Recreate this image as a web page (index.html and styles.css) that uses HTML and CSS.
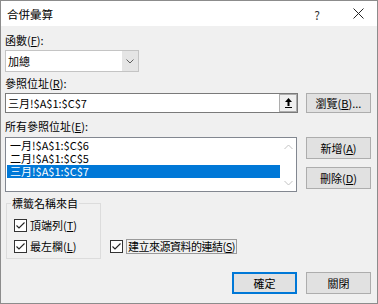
FILE: index.html
```html
<!DOCTYPE html>
<html lang="zh-Hant">
<head>
<meta charset="utf-8">
<link rel="stylesheet" href="styles.css">
</head>
<body>
<div class="win">
  <div class="titlebar">
    <span class="title">合併彙算</span>
    <span class="help">?</span>
    <span class="close"><svg width="11" height="11" viewBox="0 0 11 11"><path d="M0.5 0.5L10.5 10.5M10.5 0.5L0.5 10.5" stroke="#222" stroke-width="1" fill="none"/></svg></span>
  </div>
  <div class="content">
    <div class="lbl l1">函數(<u>F</u>):</div>
    <div class="combo">
      <span class="combo-text">加總</span>
      <span class="drop"><svg width="8" height="5" viewBox="0 0 8 5"><path d="M0.5 0.5L4 4L7.5 0.5" stroke="#606060" stroke-width="1" fill="none"/></svg></span>
    </div>
    <div class="lbl l2">參照位址(<u>R</u>):</div>
    <div class="row r1">
      <div class="refinput">
        <span class="reftext">三月!$A$1:$C$7</span>
        <span class="collapse"><svg width="9" height="12" viewBox="0 0 9 12"><path d="M4.5 1L1 5H3.5V9H5.5V5H8Z" fill="#000"/><rect x="1" y="10" width="7" height="1" fill="#000"/></svg></span>
      </div>
      <button class="btn">瀏覽(<u>B</u>)...</button>
    </div>
    <div class="lbl l3">所有參照位址(<u>E</u>):</div>
    <div class="row r2">
      <div class="list">
        <div class="items">
          <div class="item">一月!$A$1:$C$6</div>
          <div class="item">二月!$A$1:$C$5</div>
          <div class="item sel">三月!$A$1:$C$7</div>
        </div>
        <div class="sb">
          <svg width="9" height="6" viewBox="0 0 9 6"><path d="M0.5 5L4.5 1L8.5 5" stroke="#c2c2c2" stroke-width="1" fill="none"/></svg>
          <svg width="9" height="6" viewBox="0 0 9 6"><path d="M0.5 1L4.5 5L8.5 1" stroke="#c2c2c2" stroke-width="1" fill="none"/></svg>
        </div>
      </div>
      <div class="btncol">
        <button class="btn">新增(<u>A</u>)</button>
        <button class="btn">刪除(<u>D</u>)</button>
      </div>
    </div>
    <div class="row r3">
      <fieldset class="group">
        <legend>標籤名稱來自</legend>
        <label class="chk"><span class="box"><svg width="11" height="11" viewBox="0 0 11 11"><path d="M1.5 5.5L4 8L9.5 2.5" stroke="#222" stroke-width="1.1" fill="none"/></svg></span>頂端列(<u>T</u>)</label>
        <label class="chk"><span class="box"><svg width="11" height="11" viewBox="0 0 11 11"><path d="M1.5 5.5L4 8L9.5 2.5" stroke="#222" stroke-width="1.1" fill="none"/></svg></span>最左欄(<u>L</u>)</label>
      </fieldset>
      <label class="chk link"><span class="box"><svg width="11" height="11" viewBox="0 0 11 11"><path d="M1.5 5.5L4 8L9.5 2.5" stroke="#222" stroke-width="1.1" fill="none"/></svg></span><span class="focus">建立來源資料的連結(<u>S</u>)</span></label>
    </div>
    <div class="footer">
      <button class="btn default">確定</button>
      <button class="btn">關閉</button>
    </div>
  </div>
</div>
</body>
</html>
```
FILE: styles.css
```css
* { box-sizing: border-box; }
html, body { margin: 0; padding: 0; }
body {
  width: 378px;
  height: 304px;
  font-family: "Noto Sans CJK TC", "Noto Sans", sans-serif;
  font-size: 11px;
  color: #000;
  background: #f0f0f0;
}
.win {
  width: 378px;
  height: 304px;
  border: 1px solid #8c8c8c;
  background: #f0f0f0;
  display: flex;
  flex-direction: column;
}
.titlebar {
  height: 25px;
  background: #fff;
  display: flex;
  align-items: center;
  padding-left: 6px;
  flex: none;
}
.title { flex: 1; line-height: 15px; padding-top: 1px; font-size: 11.5px; }
.help { width: 12px; text-align: center; color: #333; font-size: 12px; margin-right: 30px; padding-top: 1px; }
.close { width: 11px; height: 11px; margin-right: 13px; display: flex; }
.content {
  padding: 0 6px 0 4px;
  flex: 1;
}
.lbl { height: 15px; line-height: 15px; }
.l1 { margin-top: 7px; }
.l2 { margin-top: 4px; }
.l3 { margin-top: 6px; }
u { text-decoration: underline; text-underline-offset: 1px; }
.combo {
  margin-top: 2px;
  width: 134px;
  height: 22px;
  border: 1px solid #c4c4c4;
  background: #fff;
  display: flex;
  align-items: center;
}
.combo-text { flex: 1; padding-left: 2px; line-height: 15px; }
.drop {
  width: 16px;
  height: 20px;
  background: #e5e5e5;
  display: flex;
  align-items: center;
  justify-content: center;
}
.row { display: flex; }
.r1 { margin-top: 2px; gap: 8px; align-items: flex-start; }
.refinput {
  width: 293px;
  height: 20px;
  border: 1px solid #7a7a7a;
  background: #fff;
  display: flex;
  align-items: center;
}
.reftext { flex: 1; padding-left: 2px; line-height: 15px; }
.collapse {
  width: 18px;
  height: 18px;
  border: 1px solid #adadad;
  background: #f0f0f0;
  display: flex;
  align-items: center;
  justify-content: center;
}
.btn {
  width: 65px;
  height: 22px;
  border: 1px solid #adadad;
  background: #e1e1e1;
  font-family: inherit;
  font-size: 11px;
  color: #000;
  padding: 0;
  line-height: 15px;
}
.r1 .btn { height: 20px; }
.r2 { margin-top: 3px; gap: 9px; }
.list {
  width: 292px;
  height: 55px;
  border: 1px solid #828790;
  background: #fff;
  display: flex;
}
.items { flex: 1; padding: 1px 0 0 1px; }
.item { height: 13px; line-height: 13px; padding-left: 3px; }
.sel { background: #0078d7; color: #fff; }
.sb {
  width: 16px;
  display: flex;
  flex-direction: column;
  align-items: center;
  justify-content: space-between;
  padding: 6px 0 5px;
}
.btncol { display: flex; flex-direction: column; gap: 8px; }
.r3 { margin-top: 4px; align-items: flex-end; }
.group {
  margin: 0 0 0 1px;
  width: 95px;
  border: 1px solid #dcdcdc;
  padding: 6px 0 3px 7px;
  display: flex;
  flex-direction: column;
  gap: 4px;
}
.group legend {
  padding: 0 1px;
  margin-left: -3px;
  line-height: 15px;
  height: 15px;
}
.chk {
  display: flex;
  align-items: center;
  height: 17px;
  line-height: 15px;
}
.box {
  width: 13px;
  height: 13px;
  border: 1px solid #333;
  background: #fff;
  display: flex;
  align-items: center;
  justify-content: center;
  margin-right: 3px;
  flex: none;
}
.link { margin-left: 9px; margin-bottom: 4px; }
.focus { border: 1px solid #9a9a9a; padding: 0 1px; line-height: 12px; height: 15px; letter-spacing: -0.5px; }
.footer {
  display: flex;
  justify-content: flex-end;
  gap: 9px;
  margin-top: 13px;
}
.default { border: 1px solid #0078d7; box-shadow: inset 0 0 0 1px #0078d7; }
```
